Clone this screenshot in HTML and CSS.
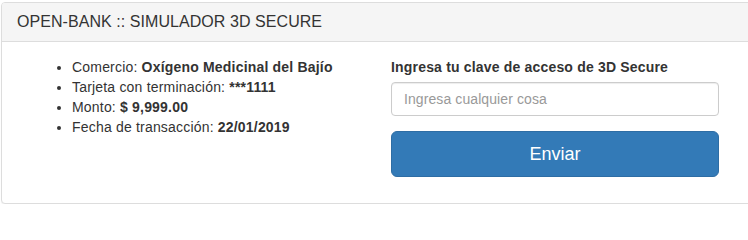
FILE: index.html
```html
<!DOCTYPE html>
<html lang="es">
<head>
<meta charset="utf-8">
<title>OPEN-BANK :: SIMULADOR 3D SECURE</title>
<link rel="stylesheet" href="styles.css">
</head>
<body>
<div class="panel">
  <div class="panel-heading">
    <h3 class="panel-title">OPEN-BANK :: SIMULADOR 3D SECURE</h3>
  </div>
  <div class="panel-body">
    <div class="col-info">
      <ul class="details">
        <li>Comercio: <strong>Oxígeno Medicinal del Bajío</strong></li>
        <li>Tarjeta con terminación: <strong>***1111</strong></li>
        <li>Monto: <strong>$ 9,999.00</strong></li>
        <li>Fecha de transacción: <strong>22/01/2019</strong></li>
      </ul>
    </div>
    <form class="col-form">
      <div class="form-group">
        <label class="form-label" for="clave">Ingresa tu clave de acceso de 3D Secure</label>
        <input class="form-control" id="clave" type="text" placeholder="Ingresa cualquier cosa">
      </div>
      <button class="btn-primary" type="button">Enviar</button>
    </form>
  </div>
</div>
</body>
</html>
```
FILE: styles.css
```css
html, body {
  margin: 0;
  padding: 0;
  background: #fff;
  overflow: hidden;
}
body {
  font-family: "Liberation Sans", Arial, Helvetica, sans-serif;
  font-size: 14px;
  line-height: 20px;
  color: #333;
}
.panel {
  margin: 2px 0 0 1px;
  width: 760px;
  border: 1px solid #ddd;
  border-radius: 4px;
  background: #fff;
  box-shadow: 0 1px 1px rgba(0, 0, 0, 0.05);
}
.panel-heading {
  background: #f5f5f5;
  border-bottom: 1px solid #ddd;
  padding: 10px 15px;
  border-radius: 3px 3px 0 0;
}
.panel-title {
  margin: 0;
  font-size: 16px;
  line-height: 18px;
  font-weight: 400;
  letter-spacing: 0.06px;
  color: #333;
}
.panel-body {
  display: flex;
  padding: 15px 15px 26px 15px;
}
.col-info {
  width: 374px;
}
.details {
  margin: 0;
  padding-left: 55px;
  letter-spacing: 0.19px;
}
.col-form {
  width: 328px;
  margin: 0;
}
.form-group {
  margin-bottom: 15px;
}
.form-label {
  display: block;
  font-weight: 700;
  margin-bottom: 5px;
  letter-spacing: 0.18px;
}
.form-control {
  display: block;
  box-sizing: border-box;
  width: 100%;
  height: 34px;
  padding: 6px 12px;
  font-family: inherit;
  font-size: 14px;
  line-height: 20px;
  letter-spacing: 0.09px;
  color: #555;
  background: #fff;
  border: 1px solid #ccc;
  border-radius: 4px;
  box-shadow: inset 0 1px 1px rgba(0, 0, 0, 0.075);
  margin: 0;
}
.form-control::placeholder {
  color: #999;
}
.btn-primary {
  display: block;
  box-sizing: border-box;
  width: 100%;
  height: 46px;
  padding: 10px 16px;
  font-family: inherit;
  font-size: 18px;
  line-height: 24px;
  color: #fff;
  background: #337ab7;
  border: 1px solid #2e6da4;
  border-radius: 6px;
  cursor: pointer;
}
```
